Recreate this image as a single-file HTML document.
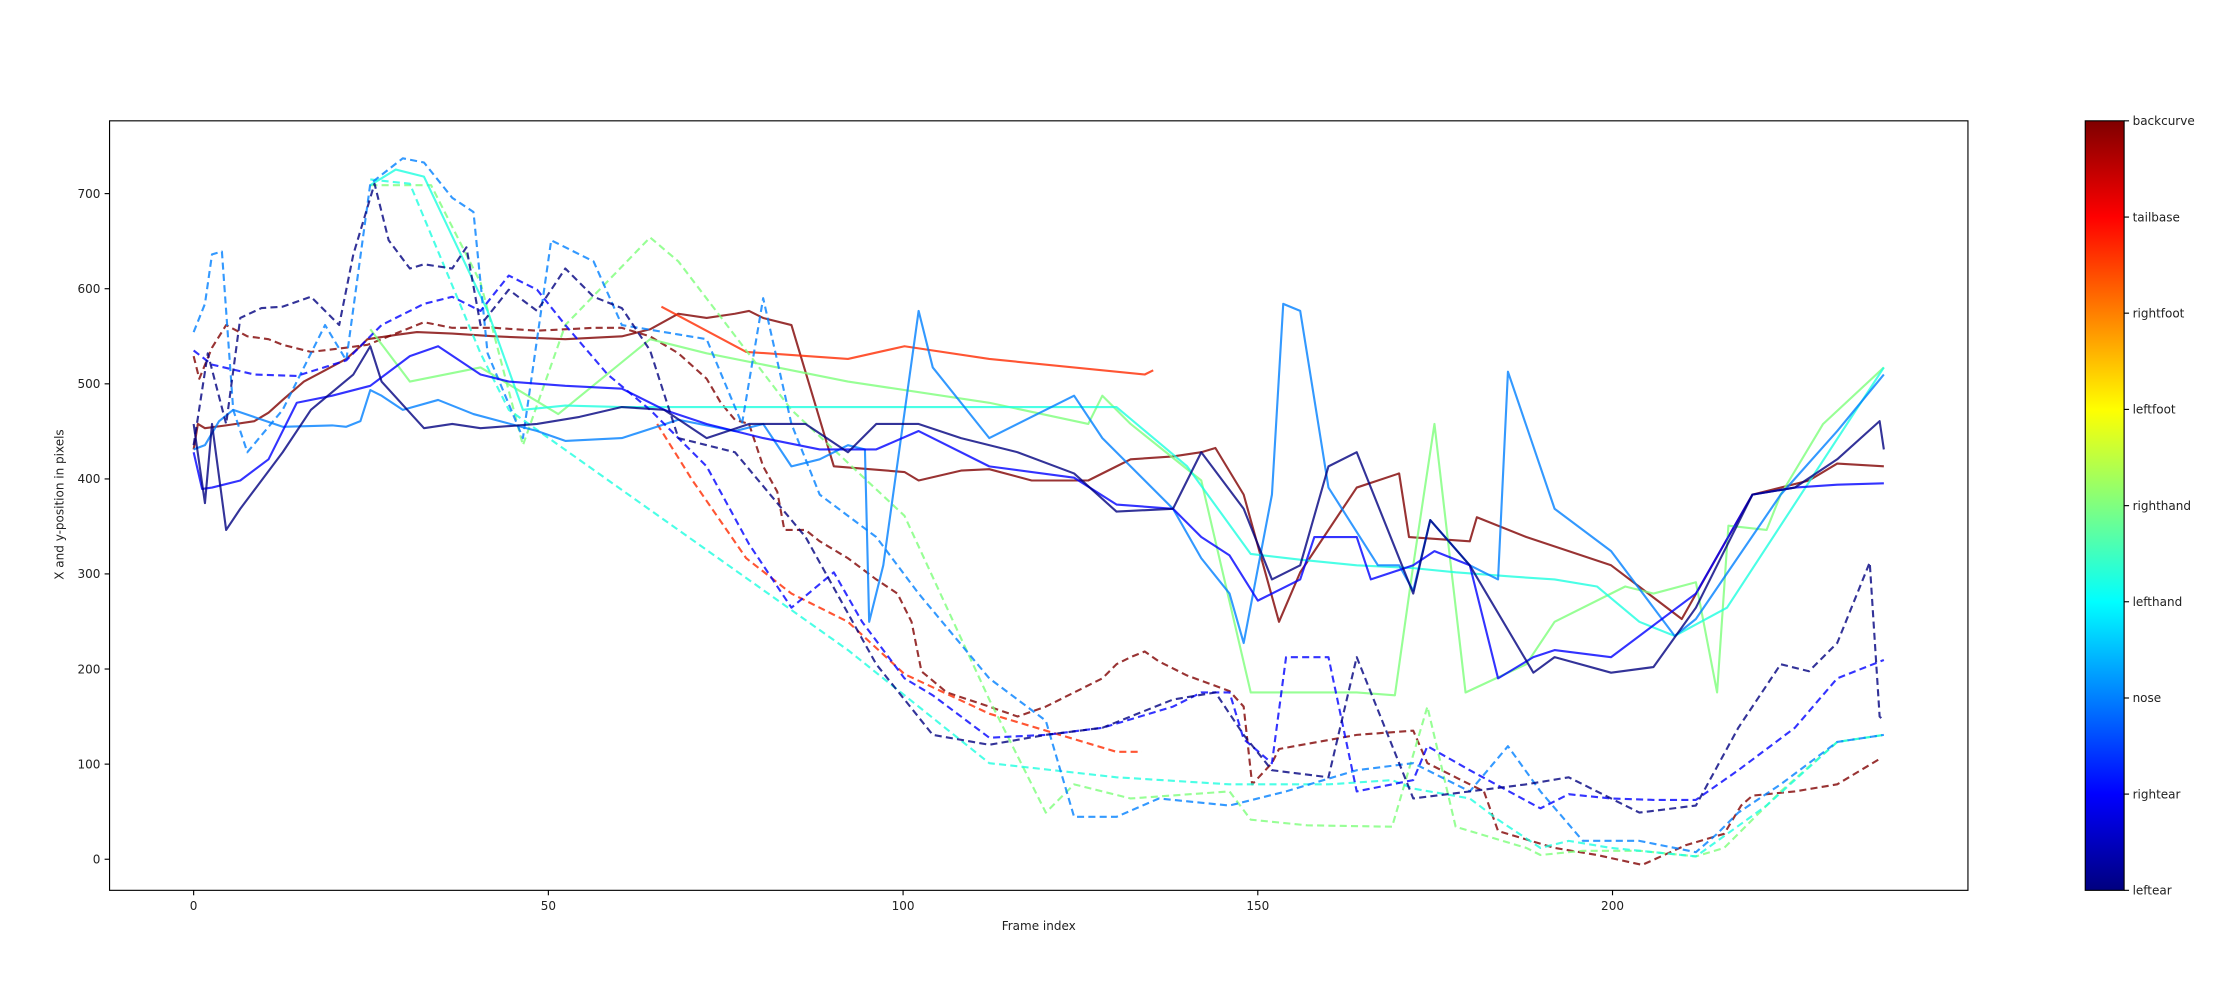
<!DOCTYPE html>
<html><head><meta charset="utf-8"><style>
html,body{margin:0;padding:0;background:#fff;width:2216px;height:1000px;overflow:hidden}
svg{display:block}
text{font-family:"DejaVu Sans","Liberation Sans",sans-serif;font-size:8.5px;fill:#222}
</style></head><body>
<svg width="2216" height="1000" viewBox="0 0 1568 707.6" xmlns="http://www.w3.org/2000/svg">
<defs>
<linearGradient id="jet" x1="0" y1="1" x2="0" y2="0">
<stop offset="0" stop-color="#00007f"/><stop offset="0.125" stop-color="#0000ff"/>
<stop offset="0.375" stop-color="#00ffff"/><stop offset="0.625" stop-color="#ffff00"/>
<stop offset="0.875" stop-color="#ff0000"/><stop offset="1" stop-color="#7f0000"/>
</linearGradient>
</defs>
<g fill="none" stroke-width="1.5" stroke-opacity="0.8" stroke-linejoin="round">
<!-- backcurve -->
<polyline stroke="#7f0000" points="137,318 140,300 145,303 160,301 180,298 190,292 200,283 215,270 230,262 245,254 255,245 260,240 280,237 295,235 320,236 350,238 400,240 440,238 460,233 480,222 500,225 520,222 530,220 540,225 560,230 590,330 640,334 650,340 680,333 700,332 730,340 770,340 790,330 800,325 830,323 850,320 860,317 880,350 905,440 920,405 960,345 990,335 997,380 1040,383 1045,366 1080,380 1140,400 1190,438 1220,385 1240,350 1280,340 1300,328 1333,330"/>
<polyline stroke="#7f0000" stroke-dasharray="5,3" points="137,252 141,268 150,246 160,230 175,238 190,240 200,244 220,249 245,246 260,244 280,236 300,228 320,232 350,232 380,234 420,232 440,232 460,238 480,250 500,268 510,285 520,297 530,300 540,330 550,348 555,375 570,375 580,383 600,395 620,410 635,420 645,440 652,475 670,490 700,500 720,507 740,500 760,490 780,480 790,470 800,465 810,461 820,468 840,478 870,489 880,500 886,555 900,540 905,530 960,520 1000,517 1010,540 1030,550 1050,560 1060,588 1100,600 1130,605 1162,612 1193,598 1220,590 1232,570 1240,563 1270,560 1300,555 1330,537"/>
<!-- tailbase -->
<polyline stroke="#ff2a00" points="468,217 528,249 600,254 640,245 700,254 810,265 816,262"/>
<polyline stroke="#ff2a00" stroke-dasharray="5,3" points="465,300 490,340 528,395 560,420 600,440 640,477 700,505 790,532 808,532"/>
<!-- righthand -->
<polyline stroke="#7dff7a" points="262,233 290,270 340,260 395,293 460,240 500,250 550,260 600,270 700,285 770,300 780,280 800,300 850,340 885,490 960,490 987,492 1000,400 1015,300 1037,490 1080,470 1100,440 1150,415 1170,420 1200,412 1215,490 1223,372 1250,375 1260,350 1290,300 1333,260"/>
<polyline stroke="#7dff7a" stroke-dasharray="5,3" points="262,131 275,131 305,131 340,200 370,315 400,230 460,168 480,185 560,290 640,365 700,495 740,575 760,555 800,565 870,560 885,580 925,584 985,585 1010,500 1030,585 1080,600 1090,605 1120,602 1160,602 1200,606 1220,600 1260,560 1300,525 1333,520"/>
<!-- lefthand -->
<polyline stroke="#1dffe0" points="262,131 280,120 300,125 345,220 370,290 400,287 440,288 560,288 790,288 840,330 885,392 920,396 960,400 1000,402 1030,405 1070,408 1100,410 1130,415 1160,440 1185,450 1222,430 1333,260"/>
<polyline stroke="#1dffe0" stroke-dasharray="5,3" points="262,127 290,130 340,250 360,290 600,460 700,540 790,550 870,555 940,555 985,552 1000,558 1040,565 1060,580 1090,600 1110,595 1140,600 1200,606 1250,570 1300,525 1333,520"/>
<!-- nose -->
<polyline stroke="#0080ff" points="137,318 145,315 155,298 165,290 200,302 235,301 245,302 255,298 262,276 270,280 285,290 310,283 335,293 380,305 400,312 440,310 480,297 520,305 540,300 560,330 580,325 600,315 612,318 615,440 625,400 650,220 660,260 700,310 760,280 780,310 800,330 830,360 850,395 870,420 880,455 900,350 908,215 920,220 940,345 975,400 990,400 1000,418 1012,368 1040,400 1060,410 1067,263 1100,360 1140,390 1185,450 1200,438 1260,350 1300,305 1333,265"/>
<polyline stroke="#0080ff" stroke-dasharray="5,3" points="137,235 145,215 150,180 157,178 165,290 175,320 200,290 230,230 245,255 262,130 285,112 300,115 320,140 335,150 345,250 370,310 390,170 420,185 440,230 500,240 525,300 540,211 560,300 580,350 620,380 650,420 700,480 740,510 760,578 790,578 820,565 870,570 910,560 960,545 1000,540 1040,560 1067,528 1090,560 1120,595 1160,595 1200,603 1215,590 1230,575 1260,555 1300,525 1333,520"/>
<!-- rightear -->
<polyline stroke="#0000ff" points="137,320 143,346 150,345 170,340 190,325 210,285 235,280 262,273 290,252 310,245 340,265 360,270 400,273 440,275 470,290 500,300 540,310 580,318 620,318 650,305 700,330 760,338 790,357 830,360 850,380 870,393 890,425 920,410 930,380 960,380 970,410 1000,400 1015,390 1040,400 1060,480 1085,465 1100,460 1140,465 1200,420 1240,350 1270,345 1300,343 1333,342"/>
<polyline stroke="#0000ff" stroke-dasharray="5,3" points="137,248 150,258 180,265 210,266 245,255 270,230 300,215 320,210 340,220 360,195 380,205 400,230 430,265 460,290 500,330 530,385 560,430 590,405 610,440 640,480 660,492 700,522 740,520 780,515 830,500 850,490 870,490 880,523 900,540 910,465 940,465 960,560 1000,552 1010,528 1040,545 1090,572 1110,562 1140,565 1170,566 1200,566 1230,545 1270,515 1300,480 1333,467"/>
<!-- leftear -->
<polyline stroke="#00007f" points="137,300 145,356 150,300 160,375 170,360 200,320 220,290 250,265 262,245 270,270 300,303 320,300 340,303 380,300 410,295 440,288 470,290 500,310 530,300 570,300 600,320 620,300 650,300 680,310 720,320 760,335 790,362 830,360 850,320 880,360 900,410 920,400 940,330 960,320 1000,420 1012,368 1040,400 1085,476 1100,465 1140,476 1170,472 1200,430 1240,350 1270,345 1300,325 1330,298 1333,318"/>
<polyline stroke="#00007f" stroke-dasharray="5,3" points="137,315 147,250 160,300 170,225 185,218 200,217 220,210 240,230 250,180 265,130 275,170 290,190 300,187 320,190 330,175 340,230 360,205 380,220 400,190 420,210 440,218 460,248 480,310 520,320 570,380 620,470 660,520 700,527 740,520 780,515 830,495 860,490 880,520 900,545 940,550 960,465 1000,565 1040,560 1080,555 1110,550 1140,565 1160,575 1200,570 1230,515 1260,470 1280,475 1300,455 1323,398 1330,507 1333,510"/>
</g>
<!-- axes -->
<rect x="77.5" y="85.5" width="1315" height="544.5" fill="none" stroke="#000" stroke-width="0.8"/>
<g stroke="#000" stroke-width="0.8">
<line x1="74" y1="137" x2="77.5" y2="137"/><line x1="74" y1="204.3" x2="77.5" y2="204.3"/><line x1="74" y1="271.6" x2="77.5" y2="271.6"/><line x1="74" y1="338.9" x2="77.5" y2="338.9"/><line x1="74" y1="406.1" x2="77.5" y2="406.1"/><line x1="74" y1="473.4" x2="77.5" y2="473.4"/><line x1="74" y1="540.7" x2="77.5" y2="540.7"/><line x1="74" y1="608" x2="77.5" y2="608"/>
<line x1="137" y1="630" x2="137" y2="633.5"/><line x1="388" y1="630" x2="388" y2="633.5"/><line x1="639" y1="630" x2="639" y2="633.5"/><line x1="890" y1="630" x2="890" y2="633.5"/><line x1="1141" y1="630" x2="1141" y2="633.5"/>
</g>
<g text-anchor="end">
<text x="71" y="140">700</text><text x="71" y="207.3">600</text><text x="71" y="274.6">500</text><text x="71" y="341.9">400</text><text x="71" y="409.1">300</text><text x="71" y="476.4">200</text><text x="71" y="543.7">100</text><text x="71" y="611">0</text>
</g>
<g text-anchor="middle">
<text x="137" y="644">0</text><text x="388" y="644">50</text><text x="639" y="644">100</text><text x="890" y="644">150</text><text x="1141" y="644">200</text>
<text x="735" y="658">Frame index</text>
<text transform="translate(45,357) rotate(-90)">X and y-position in pixels</text>
</g>
<!-- colorbar -->
<rect x="1475.5" y="85.5" width="27.5" height="544.5" fill="url(#jet)" stroke="#000" stroke-width="0.8"/>
<g stroke="#000" stroke-width="0.8">
<line x1="1503" y1="85.5" x2="1506.5" y2="85.5"/><line x1="1503" y1="153.6" x2="1506.5" y2="153.6"/><line x1="1503" y1="221.6" x2="1506.5" y2="221.6"/><line x1="1503" y1="289.7" x2="1506.5" y2="289.7"/><line x1="1503" y1="357.8" x2="1506.5" y2="357.8"/><line x1="1503" y1="425.8" x2="1506.5" y2="425.8"/><line x1="1503" y1="493.9" x2="1506.5" y2="493.9"/><line x1="1503" y1="561.9" x2="1506.5" y2="561.9"/><line x1="1503" y1="630" x2="1506.5" y2="630"/>
</g>
<g>
<text x="1509" y="88.5">backcurve</text><text x="1509" y="156.6">tailbase</text><text x="1509" y="224.6">rightfoot</text><text x="1509" y="292.7">leftfoot</text><text x="1509" y="360.8">righthand</text><text x="1509" y="428.8">lefthand</text><text x="1509" y="496.9">nose</text><text x="1509" y="564.9">rightear</text><text x="1509" y="633">leftear</text>
</g>
</svg>
</body></html>
